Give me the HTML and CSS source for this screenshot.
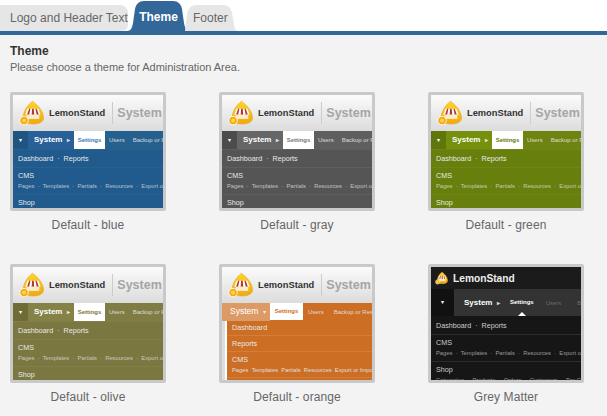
FILE: index.html
```html
<!DOCTYPE html>
<html lang="en">
<head>
    <meta charset="UTF-8">
    <title>Theme</title>
    <link rel="stylesheet" href="styles.css">
</head>
<body>
    <svg class="defs" width="0" height="0">
        <defs>
            <linearGradient id="dome" x1="0" y1="0" x2="0" y2="1">
                <stop offset="0" stop-color="#fbd52a"/>
                <stop offset="1" stop-color="#f2a90c"/>
            </linearGradient>
        </defs>
        <symbol id="logo" viewBox="0 0 32 30">
            <path d="M16 1C11 5 5 12 5 21c0 5 6 7 12 7s12-2 12-7C29 12 21 5 16 1z" fill="url(#dome)" stroke="#e09a0a" stroke-width=".6"/>
            <path d="M10 10h13l2.500 7h-18z" fill="#fff"/>
            <path d="M12 10l-2.500 7h2.500l1.500-7zM15.500 10l-.5 7h3l-.5-7zM19.500 10l1.500 7h2.500l-2.500-7z" fill="#b5362a"/>
            <path d="M9 17h15v5H9z" fill="#f6ecd0"/>
            <circle cx="6" cy="24" r="5" fill="#f5a90c" stroke="#fff" stroke-width="1"/>
            <circle cx="6" cy="24" r="2.500" fill="#fbd34a"/>
        </symbol>
    </svg>

    <nav class="tabs">
        <a class="tab first">Logo and Header Text</a>
        <a class="tab active">Theme</a>
        <a class="tab last">Footer</a>
    </nav>

    <main class="content">
        <h2>Theme</h2>
        <p class="intro">Please choose a theme for Administration Area.</p>

        <div class="themes">
            <div class="theme">
                <div class="thumb blue">
                    <div class="thumb-head">
                        <svg class="logo"><use href="#logo"/></svg>
                        <b class="brand">LemonStand</b>
                        <span class="section">System</span>
                    </div>
                    <div class="thumb-nav">
                        <span class="toggle">▾</span>
                        <span class="sys">System <i>▸</i></span>
                        <span class="cur">Settings</span>
                        <span class="lnk">Users</span>
                        <span class="lnk">Backup or Restore</span>
                    </div>
                    <div class="row">Dashboard &nbsp;·&nbsp; Reports</div>
                    <div class="row">CMS<small>Pages &nbsp;·&nbsp; Templates &nbsp;·&nbsp; Partials &nbsp;·&nbsp; Resources &nbsp;·&nbsp; Export or Import</small></div>
                    <div class="row">Shop</div>
                </div>
                <div class="name">Default - blue</div>
            </div>

            <div class="theme">
                <div class="thumb gray">
                    <div class="thumb-head">
                        <svg class="logo"><use href="#logo"/></svg>
                        <b class="brand">LemonStand</b>
                        <span class="section">System</span>
                    </div>
                    <div class="thumb-nav">
                        <span class="toggle">▾</span>
                        <span class="sys">System <i>▸</i></span>
                        <span class="cur">Settings</span>
                        <span class="lnk">Users</span>
                        <span class="lnk">Backup or Restore</span>
                    </div>
                    <div class="row">Dashboard &nbsp;·&nbsp; Reports</div>
                    <div class="row">CMS<small>Pages &nbsp;·&nbsp; Templates &nbsp;·&nbsp; Partials &nbsp;·&nbsp; Resources &nbsp;·&nbsp; Export or Import</small></div>
                    <div class="row">Shop</div>
                </div>
                <div class="name">Default - gray</div>
            </div>

            <div class="theme">
                <div class="thumb green">
                    <div class="thumb-head">
                        <svg class="logo"><use href="#logo"/></svg>
                        <b class="brand">LemonStand</b>
                        <span class="section">System</span>
                    </div>
                    <div class="thumb-nav">
                        <span class="toggle">▾</span>
                        <span class="sys">System <i>▸</i></span>
                        <span class="cur">Settings</span>
                        <span class="lnk">Users</span>
                        <span class="lnk">Backup or Restore</span>
                    </div>
                    <div class="row">Dashboard &nbsp;·&nbsp; Reports</div>
                    <div class="row">CMS<small>Pages &nbsp;·&nbsp; Templates &nbsp;·&nbsp; Partials &nbsp;·&nbsp; Resources &nbsp;·&nbsp; Export or Import</small></div>
                    <div class="row">Shop</div>
                </div>
                <div class="name">Default - green</div>
            </div>

            <div class="theme">
                <div class="thumb olive">
                    <div class="thumb-head">
                        <svg class="logo"><use href="#logo"/></svg>
                        <b class="brand">LemonStand</b>
                        <span class="section">System</span>
                    </div>
                    <div class="thumb-nav">
                        <span class="toggle">▾</span>
                        <span class="sys">System <i>▸</i></span>
                        <span class="cur">Settings</span>
                        <span class="lnk">Users</span>
                        <span class="lnk">Backup or Restore</span>
                    </div>
                    <div class="row">Dashboard &nbsp;·&nbsp; Reports</div>
                    <div class="row">CMS<small>Pages &nbsp;·&nbsp; Templates &nbsp;·&nbsp; Partials &nbsp;·&nbsp; Resources &nbsp;·&nbsp; Export or Import</small></div>
                    <div class="row">Shop</div>
                </div>
                <div class="name">Default - olive</div>
            </div>

            <div class="theme">
                <div class="thumb orange">
                    <div class="thumb-head">
                        <svg class="logo"><use href="#logo"/></svg>
                        <b class="brand">LemonStand</b>
                        <span class="section">System</span>
                    </div>
                    <div class="thumb-nav">
                        <span class="sys">System <i>▾</i></span>
                        <span class="cur">Settings</span>
                        <span class="lnk">Users</span>
                        <span class="lnk">Backup or Restore</span>
                    </div>
                    <div class="side">
                        <div class="row">Dashboard</div>
                        <div class="row">Reports</div>
                        <div class="row">CMS<small>Pages &nbsp;Templates &nbsp;Partials &nbsp;Resources &nbsp;Export or Import</small></div>
                    </div>
                </div>
                <div class="name">Default - orange</div>
            </div>

            <div class="theme">
                <div class="thumb grey-matter">
                    <div class="thumb-head">
                        <svg class="logo"><use href="#logo"/></svg>
                        <b class="brand">LemonStand</b>
                    </div>
                    <div class="thumb-nav">
                        <span class="toggle">▾</span>
                        <span class="sys">System <i>▸</i></span>
                        <span class="cur">Settings</span>
                        <span class="lnk">Users</span>
                        <span class="lnk">Backup or Restore</span>
                    </div>
                    <div class="row">Dashboard &nbsp;·&nbsp; Reports</div>
                    <div class="row">CMS<small>Pages &nbsp;·&nbsp; Templates &nbsp;·&nbsp; Partials &nbsp;·&nbsp; Resources &nbsp;·&nbsp; Export or Import</small></div>
                    <div class="row">Shop<small>Categories &nbsp;·&nbsp; Products &nbsp;·&nbsp; Orders &nbsp;·&nbsp; Customers &nbsp;·&nbsp; Tax Classes</small></div>
                </div>
                <div class="name">Grey Matter</div>
            </div>
        </div>
    </main>
</body>
</html>
```

FILE: styles.css
```css
body {
    margin: 0;
    height: 416px;
    overflow: hidden;
    font-family: 'Liberation Sans', Arial, sans-serif;
    background: #f3f3f3;
    color: #555;
}
.defs {
    display: block;
    height: 0;
}

/* tabs */
.tabs {
    display: flex;
    align-items: flex-end;
    height: 31px;
    background: #fff;
    border-bottom: 4px solid #336699;
}
.tab {
    flex: none;
    box-sizing: border-box;
    height: 26px;
    line-height: 26px;
    font-size: 12px;
    white-space: nowrap;
    color: #666;
    background: #e6e6e6;
}
.tab.first {
    width: 128px;
    padding-left: 10px;
    border-radius: 0 8px 6px 0;
}
.tab.active {
    position: relative;
    width: 63px;
    height: 30px;
    margin-left: -1px;
    line-height: 32px;
    text-align: center;
    font-weight: bold;
    color: #fff;
    background: #336699;
    clip-path: path('M0 30C4 30 5 27 6 22L8 8C9 3 12 0 17 0H46C51 0 54 3 55 8L57 22C58 27 59 30 63 30Z');
}
.tab.last {
    width: 54px;
    margin-left: -5px;
    padding-left: 8px;
    clip-path: path('M0 26L2 10C3 3 6 0 12 0H38C43 0 46 3 47 8L49 20C50 24 51 26 54 26Z');
}

.content {
    padding: 8px 10px 0;
}
h2 {
    margin: 0;
    font-size: 12px;
    line-height: 16px;
    color: #333;
}
.intro {
    margin: 0 0 16px;
    font-size: 11px;
    line-height: 17px;
    letter-spacing: -.04px;
    color: #666;
}

.themes {
    display: grid;
    grid-template-columns: repeat(3, 156px);
    column-gap: 53px;
    row-gap: 19px;
}
.theme {
    height: 153px;
}
.name {
    margin-top: 7px;
    text-align: center;
    font-size: 12px;
    line-height: 14px;
    letter-spacing: .1px;
    color: #666;
}

/* theme preview */
.thumb {
    box-sizing: border-box;
    width: 156px;
    height: 119px;
    overflow: hidden;
    border: 3px solid #c9c9c9;
    border-radius: 2px;
    background: var(--bg);
    color: #e8e8e8;
    font-size: 7.2px;
    white-space: nowrap;
}
.blue { --bg: #215a8c; --bar: #26608f; --tog: #1e5583; --sys: #296097; --hi: #3a7ab0; --line: #266190; }
.gray { --bg: #555; --bar: #5f5f5f; --tog: #4c4c4c; --sys: #666; --hi: #777; --line: #5e5e5e; }
.green { --bg: #677f0c; --bar: #6d8510; --tog: #5f770a; --sys: #74900c; --hi: #5f7a0a; --line: #6f8614; }
.olive { --bg: #7a7740; --bar: #7f7c44; --tog: #6f6c38; --sys: #858248; --hi: #7a7740; --line: #817e48; }
.orange { --bg: #cc6e24; --bar: #cc6e24; --tog: #cc6e24; --sys: #dc9a66; --hi: #c8691e; --line: #d47c38; }
.grey-matter { --bg: #161616; --bar: #111; --tog: #111; --sys: #333; --hi: #fff; --line: #2c2c2c; }

.thumb-head {
    display: flex;
    align-items: center;
    height: 36px;
    background: linear-gradient(#fbfbfb, #dcdcdc);
}
.logo {
    width: 27px;
    height: 26px;
    margin-left: 6px;
    flex: none;
}
.brand {
    margin-left: 3px;
    font-size: 9.3px;
    color: #333;
}
.section {
    margin-left: 7px;
    padding-left: 4px;
    border-left: 1px solid #ccc;
    font-size: 12.5px;
    line-height: 22px;
    font-weight: bold;
    color: #a5a5a5;
}
.thumb-nav {
    display: flex;
    align-items: center;
    box-sizing: border-box;
    height: 19px;
    background: var(--bar);
    border-bottom: 1px solid var(--line);
}
.thumb-nav span {
    flex: none;
}
.toggle {
    width: 15px;
    text-align: center;
    font-size: 6px;
    line-height: 18px;
    color: #fff;
    background: var(--tog);
}
.sys {
    box-sizing: border-box;
    width: 46px;
    padding-left: 6px;
    background: var(--sys);
    font-size: 8px;
    font-weight: bold;
    line-height: 18px;
    color: #fff;
}
.sys i {
    font-style: normal;
    font-size: 6px;
    margin-left: 2px;
    opacity: .8;
}
.cur {
    width: 31px;
    text-align: center;
    background: #fff;
    line-height: 18px;
    font-size: 6px;
    font-weight: bold;
    color: var(--hi);
}
.lnk {
    margin-left: 4px;
    margin-right: 4px;
    font-size: 6px;
    opacity: .85;
}
.row {
    padding: 4px 5px 3px;
    line-height: 10px;
    border-bottom: 1px solid var(--line);
}
.row + .row {
    padding-top: 3px;
}
.row small {
    display: block;
    margin-top: 1px;
    font-size: 5.8px;
    line-height: 9px;
    opacity: .7;
}

/* orange has its own nav */
.orange {
    background: linear-gradient(to right, #ddd 3px, #fff 3px, #fff 5px, var(--bg) 5px);
}
.orange .thumb-nav {
    height: 17px;
    border-bottom: 0;
}
.orange .sys {
    width: 48px;
    padding-left: 8px;
    font-weight: normal;
    font-size: 8.5px;
    line-height: 17px;
}
.orange .cur {
    width: 33px;
    line-height: 17px;
    color: #cc6e24;
}
.orange .lnk {
    margin-left: 5px;
    margin-right: 5px;
}
.side {
    margin-left: 5px;
}
.orange .row {
    padding: 3px 5px 2px;
}
.orange .row small {
    opacity: .9;
}

/* grey matter is laid out differently */
.grey-matter {
    color: #ccc;
}
.grey-matter .thumb-head {
    height: 22px;
    background: #1b1b1b;
}
.grey-matter .logo {
    width: 14px;
    height: 14px;
    margin-left: 4px;
}
.grey-matter .brand {
    margin-left: 4px;
    font-size: 10.2px;
    color: #eee;
}
.grey-matter .thumb-nav {
    height: 27px;
    background: #333;
    border-bottom: 0;
}
.grey-matter .toggle {
    width: 23px;
    margin-right: 1px;
    background: #111;
    line-height: 27px;
}
.grey-matter .sys {
    width: 47px;
    padding-left: 9px;
    line-height: 27px;
    background: none;
}
.grey-matter .cur {
    position: relative;
    width: auto;
    margin-left: 8px;
    line-height: 27px;
    background: none;
}
.grey-matter .cur::after {
    content: "";
    position: absolute;
    left: 8px;
    bottom: 0;
    border: 4px solid transparent;
    border-top: 0;
    border-bottom-color: #fff;
}
.grey-matter .lnk {
    margin-left: 12px;
    color: #777;
}
.grey-matter .row {
    padding: 5px 5px 3px;
}
.grey-matter .row + .row {
    padding-top: 3px;
}
```
